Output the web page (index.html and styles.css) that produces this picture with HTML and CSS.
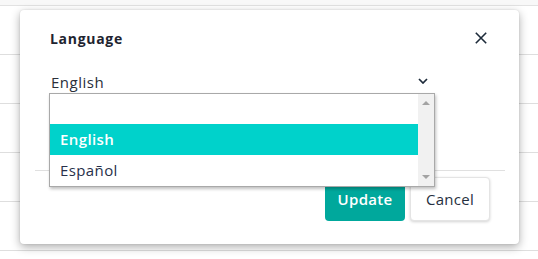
FILE: index.html
```html
<!DOCTYPE html>
<html lang="en">
<head>
<meta charset="utf-8">
<title>Language</title>
<link rel="stylesheet" href="styles.css">
</head>
<body>
<div class="page">
  <div class="top-strip"></div>
  <div class="row"></div>
  <div class="row"></div>
  <div class="row"></div>
  <div class="row"></div>
  <div class="row"></div>
</div>

<div class="modal">
  <div class="modal-header">
    <h2 class="title">Language</h2>
    <button class="close" aria-label="Close">
      <svg width="12" height="12" viewBox="0 0 12 12"><path d="M0.8 0.8 L11.2 11.2 M11.2 0.8 L0.8 11.2" stroke="#1d2b3a" stroke-width="1.6" fill="none"/></svg>
    </button>
  </div>
  <div class="field">
    <div class="select">
      <span class="select-value">English</span>
      <svg class="chevron" width="10" height="6" viewBox="0 0 10 6"><path d="M1 1 L5 5 L9 1" stroke="#1d2b3a" stroke-width="1.7" fill="none"/></svg>
    </div>
    <div class="listbox">
      <div class="options">
        <div class="option empty"></div>
        <div class="option selected">English</div>
        <div class="option">Español</div>
      </div>
      <div class="scrollbar">
        <span class="arrow up"></span>
        <span class="arrow down"></span>
      </div>
    </div>
  </div>
  <div class="modal-footer">
    <button class="btn btn-primary">Update</button>
    <button class="btn btn-secondary">Cancel</button>
  </div>
</div>
</body>
</html>
```

FILE: styles.css
```css
html, body {
  margin: 0;
  padding: 0;
}
body {
  width: 538px;
  height: 259px;
  overflow: hidden;
  background: #ffffff;
  font-family: "Open Sans", "Liberation Sans", sans-serif;
  position: relative;
}
.page {
  display: flex;
  flex-direction: column;
}
.top-strip {
  height: 5px;
  background: #f8f8f8;
  border-bottom: 1px solid #e2e2e2;
}
.row {
  height: 48px;
  border-bottom: 1px solid #dedede;
}
.modal {
  position: absolute;
  left: 20px;
  top: 10px;
  width: 499px;
  box-sizing: border-box;
  background: #ffffff;
  border-radius: 4px;
  box-shadow: 0 3px 10px rgba(0, 0, 0, 0.32), 0 0 2px rgba(0, 0, 0, 0.12);
  padding: 18px 0 23px 0;
  display: flex;
  flex-direction: column;
}
.modal-header {
  display: flex;
  align-items: center;
  justify-content: space-between;
  padding: 0 32px 0 30px;
  height: 20px;
}
.title {
  margin: 0;
  font-size: 14px;
  line-height: 20px;
  font-weight: 700;
  color: #1e2430;
  letter-spacing: 0.7px;
  position: relative;
  top: 1px;
}
.close {
  border: 0;
  background: none;
  padding: 0;
  width: 12px;
  height: 12px;
  display: flex;
}
.field {
  position: relative;
  margin: 22px 0 0 30px;
  width: 385px;
}
.select {
  height: 24px;
  display: flex;
  align-items: center;
  justify-content: space-between;
  padding: 0 7px 0 1px;
  font-size: 15px;
  color: #2a2f3a;
  letter-spacing: 0.5px;
}
.chevron {
  display: block;
  margin-top: -2px;
}
.listbox {
  position: absolute;
  left: -1px;
  top: 23px;
  width: 386px;
  box-sizing: border-box;
  border: 1px solid #a9a9a9;
  background: #ffffff;
  box-shadow: 1px 2px 3px rgba(0, 0, 0, 0.25);
  display: flex;
  z-index: 5;
}
.options {
  flex: 1;
  display: flex;
  flex-direction: column;
}
.option {
  height: 31px;
  line-height: 31px;
  padding-left: 10px;
  font-size: 15px;
  color: #27304a;
  letter-spacing: 0.4px;
}
.option.empty {
  height: 30px;
}
.option.selected {
  background: #00d2cb;
  color: #ffffff;
  font-weight: 600;
}
.scrollbar {
  width: 16px;
  background: #f1f1f1;
  display: flex;
  flex-direction: column;
  justify-content: space-between;
  align-items: center;
  padding: 7px 0 7px 0;
}
.arrow {
  width: 0;
  height: 0;
  border-left: 4px solid transparent;
  border-right: 4px solid transparent;
}
.arrow.up {
  border-bottom: 4px solid #a3a3a3;
}
.arrow.down {
  border-top: 4px solid #a3a3a3;
}
.modal-footer {
  margin: 76px 14px 0 15px;
  border-top: 1px solid #e0e0e0;
  padding: 6px 15px 0 0;
  display: flex;
  justify-content: flex-end;
  gap: 5px;
}
.btn {
  width: 80px;
  height: 44px;
  border-radius: 4px;
  font-family: "Open Sans", "Liberation Sans", sans-serif;
  font-size: 15px;
  letter-spacing: 0.3px;
  cursor: pointer;
}
.btn-primary {
  background: #00a89c;
  border: 0;
  color: #ffffff;
  font-weight: 600;
}
.btn-secondary {
  background: #ffffff;
  border: 1px solid #e4e4e4;
  color: #263040;
  box-shadow: 0 1px 3px rgba(0, 0, 0, 0.18);
}
```
